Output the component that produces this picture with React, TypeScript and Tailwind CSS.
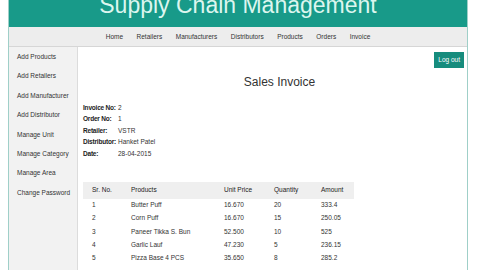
import React from 'react';

const navItems = ['Home', 'Retailers', 'Manufacturers', 'Distributors', 'Products', 'Orders', 'Invoice'];

const sideItems = [
  'Add Products',
  'Add Retailers',
  'Add Manufacturer',
  'Add Distributor',
  'Manage Unit',
  'Manage Category',
  'Manage Area',
  'Change Password',
];

const details = [
  { label: 'Invoice No:', value: '2' },
  { label: 'Order No:', value: '1' },
  { label: 'Retailer:', value: 'VSTR' },
  { label: 'Distributor:', value: 'Hanket Patel' },
  { label: 'Date:', value: '28-04-2015' },
];

const rows = [
  { sr: '1', product: 'Butter Puff', price: '16.670', qty: '20', amount: '333.4' },
  { sr: '2', product: 'Corn Puff', price: '16.670', qty: '15', amount: '250.05' },
  { sr: '3', product: 'Paneer Tikka S. Bun', price: '52.500', qty: '10', amount: '525' },
  { sr: '4', product: 'Garlic Lauf', price: '47.230', qty: '5', amount: '236.15' },
  { sr: '5', product: 'Pizza Base 4 PCS', price: '35.650', qty: '8', amount: '285.2' },
];

const App: React.FC = () => {
  return (
    <div className="w-[480px] h-[270px] overflow-hidden bg-white font-['Liberation_Sans',Arial,sans-serif] text-[#333]">
      <div className="ml-[8px] w-[460px] h-full flex flex-col border-x border-[#9fcfc8]">
        {/* Header */}
        <header className="h-[27px] bg-[#189a89] overflow-hidden flex justify-center">
          <h1 className="text-[23px] leading-none text-[#dcf6ef] mt-[-6px] whitespace-nowrap">Supply Chain Management</h1>
        </header>

        {/* Nav */}
        <nav className="h-[20px] bg-[#ededed] border-b border-[#d6d6d6] flex items-center justify-center gap-[13.5px] text-[6.5px] text-[#333]">
          {navItems.map((item) => (
            <span key={item}>{item}</span>
          ))}
        </nav>

        <div className="flex flex-1">
          {/* Sidebar */}
          <aside className="w-[69px] bg-[#f2f2f2] border-r border-[#dcdcdc] pt-[5px] pl-[8px] flex flex-col text-[6.5px] text-[#333]">
            {sideItems.map((item) => (
              <div key={item} className="h-[19.4px] leading-[10px] whitespace-nowrap">{item}</div>
            ))}
          </aside>

          {/* Content */}
          <main className="flex-1 pl-[5px] pr-[3px] pt-[5px]">
            <div className="flex justify-end">
              <button className="bg-[#168c7d] text-white text-[6.5px] px-[4px] h-[16px] leading-[16px]">Log out</button>
            </div>
            <h2 className="text-center text-[12px] leading-none text-[#333] mt-[8px] ml-[12px]">Sales Invoice</h2>

            <div className="mt-[14px] flex flex-col text-[6.5px]">
              {details.map((d) => (
                <div key={d.label} className="flex h-[11.5px] items-center whitespace-nowrap">
                  <span className="w-[35px] shrink-0 font-bold text-[#222] tracking-[-0.2px]">{d.label}</span>
                  <span>{d.value}</span>
                </div>
              ))}
            </div>

            <table className="mt-[22px] w-[271px] table-fixed border-collapse text-[6.5px] text-left">
              <colgroup>
                <col className="w-[39px]" />
                <col className="w-[93px]" />
                <col className="w-[50px]" />
                <col className="w-[47px]" />
                <col className="w-[42px]" />
              </colgroup>
              <thead>
                <tr className="bg-[#efefef] h-[17px]">
                  <th className="pl-[9px] font-normal text-[#222]">Sr. No.</th>
                  <th className="pl-[9px] font-normal text-[#222]">Products</th>
                  <th className="pl-[9px] font-normal text-[#222]">Unit Price</th>
                  <th className="pl-[9px] font-normal text-[#222]">Quantity</th>
                  <th className="pl-[9px] font-normal text-[#222]">Amount</th>
                </tr>
              </thead>
              <tbody>
                {rows.map((r) => (
                  <tr key={r.sr} className="h-[13.2px]">
                    <td className="pl-[9px]">{r.sr}</td>
                    <td className="pl-[9px]">{r.product}</td>
                    <td className="pl-[9px]">{r.price}</td>
                    <td className="pl-[9px]">{r.qty}</td>
                    <td className="pl-[9px]">{r.amount}</td>
                  </tr>
                ))}
              </tbody>
            </table>
          </main>
        </div>
      </div>
    </div>
  );
};

export default App;
